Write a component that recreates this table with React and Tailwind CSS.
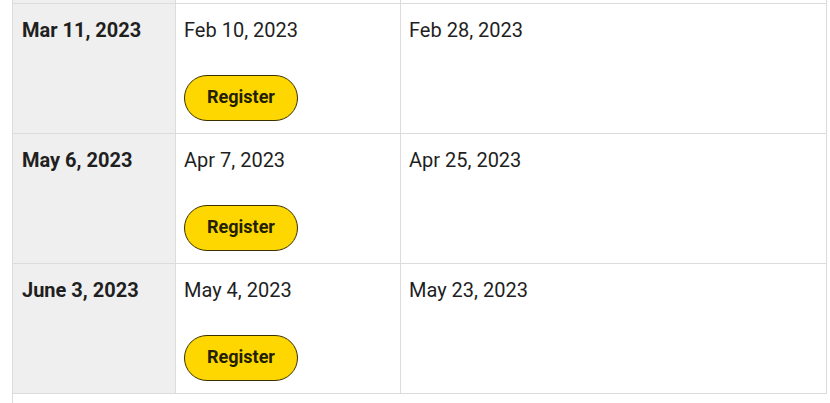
import React from "react";

const rows = [
  { date: "Mar 11, 2023", open: "Feb 10, 2023", close: "Feb 28, 2023" },
  { date: "May 6, 2023", open: "Apr 7, 2023", close: "Apr 25, 2023" },
  { date: "June 3, 2023", open: "May 4, 2023", close: "May 23, 2023" },
];

export default function App() {
  return (
    <div
      className="bg-white w-[830px] h-[403px] overflow-hidden text-[#1f1f1f]"
      style={{ fontFamily: "Roboto, 'Liberation Sans', sans-serif" }}
    >
      <div className="ml-[12px] w-[815px]">
        <div className="grid grid-cols-[163px_225px_1fr] h-[3px] border-l border-[#dcdcdc]">
          <div className="bg-[#efefef] border-r border-[#dcdcdc]" />
          <div className="border-r border-[#dcdcdc]" />
          <div className="border-r border-[#dcdcdc]" />
        </div>
        <div className="border-t border-l border-[#dcdcdc]">
          {rows.map((r) => (
            <div
              key={r.date}
              className="grid grid-cols-[163px_225px_1fr] h-[130px] border-b border-[#dcdcdc]"
            >
              <div className="bg-[#efefef] border-r border-[#dcdcdc] pl-[9px] pt-[11px] text-[20px] leading-[30px] font-bold">
                {r.date}
              </div>
              <div className="border-r border-[#dcdcdc] pl-2 pt-[11px] flex flex-col items-start">
                <div className="text-[20px] leading-[30px]">{r.open}</div>
                <button className="mt-[30px] h-[46px] w-[114px] pb-[2px] rounded-full bg-[#fed700] border border-[#3a3000] text-[18px] leading-[24px] font-bold text-[#231f00]">
                  Register
                </button>
              </div>
              <div className="border-r border-[#dcdcdc] pl-2 pt-[11px] text-[20px] leading-[30px]">
                {r.close}
              </div>
            </div>
          ))}
        </div>
        <div className="h-[10px] border-l border-[#dcdcdc]" />
      </div>
    </div>
  );
}
